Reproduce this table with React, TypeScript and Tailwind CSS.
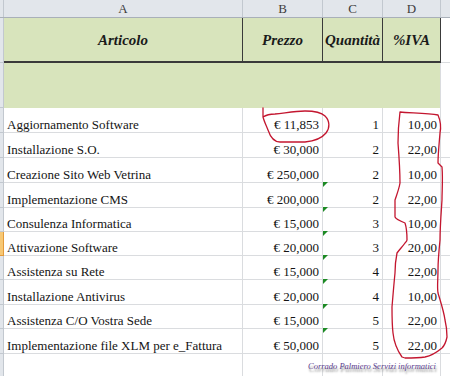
import React from "react";

type Row = {
  name: string;
  price: string;
  qty: string;
  iva: string;
  h: string;
  flag?: boolean;
  sel?: boolean;
};

const rows: Row[] = [
  { name: "Aggiornamento Software", price: "€ 11,853", qty: "1", iva: "10,00", h: "h-[25px]" },
  { name: "Installazione S.O.", price: "€ 30,000", qty: "2", iva: "22,00", h: "h-[25px]" },
  { name: "Creazione Sito Web Vetrina", price: "€ 250,000", qty: "2", iva: "10,00", h: "h-[25px]" },
  { name: "Implementazione CMS", price: "€ 200,000", qty: "2", iva: "22,00", h: "h-[25px]", flag: true },
  { name: "Consulenza Informatica", price: "€ 15,000", qty: "3", iva: "10,00", h: "h-[24px]", flag: true },
  { name: "Attivazione Software", price: "€ 20,000", qty: "3", iva: "20,00", h: "h-[24px]", flag: true, sel: true },
  { name: "Assistenza su Rete", price: "€ 15,000", qty: "4", iva: "22,00", h: "h-[24px]", flag: true },
  { name: "Installazione Antivirus", price: "€ 20,000", qty: "4", iva: "10,00", h: "h-[25px]", flag: true },
  { name: "Assistenza C/O Vostra Sede", price: "€ 15,000", qty: "5", iva: "22,00", h: "h-[24px]", flag: true },
  { name: "Implementazione file XLM per e_Fattura", price: "€ 50,000", qty: "5", iva: "22,00", h: "h-[25px]", flag: true },
];

function Markup() {
  return (
    <svg
      className="pointer-events-none absolute left-0 top-0"
      width={450}
      height={376}
      viewBox="0 0 450 376"
      fill="none"
      stroke="#c3162f"
      strokeWidth={1.3}
      strokeLinejoin="round"
      strokeLinecap="round"
    >
      <path d="M263,108 L263,117 C266,115 270,114 275,114 C285,113 295,111 305,111 C315,111 321,112 325,116 C330,121 330,128 326,133 C322,138 315,141 305,142 L280,142 C273,142 270,136 268,130 C266,125 264,121 263,117" />
      <path d="M400,112 C410,113 428,113 438,115 C441,122 441,128 440,133 C439,145 438,155 438,163 L442,167 C443,180 442,190 442,200 C441,215 440,228 440,240 C439,250 438,260 438,270 C438,280 437,287 438,293 C441,303 444,312 445,320 C447,328 447,333 447,337 C446,342 444,346 442,348 C436,353 430,356 425,357 C418,358 410,358 405,358 L402,357 C397,350 394,343 393,333 C392,325 392,315 392,307 C393,295 394,283 395,273 C395,265 396,258 397,253 C400,249 403,246 405,243 C406,242 407,241 407,240 C407,232 406,226 405,223 C400,221 396,219 395,217 C395,211 395,205 395,200 C397,194 399,189 400,183 C400,170 399,156 398,143 C398,130 399,120 400,112 Z" />
    </svg>
  );
}

export default function App() {
  return (
    <div className="relative h-[376px] w-[450px] overflow-hidden bg-white [font-family:'Liberation_Serif','Times_New_Roman',serif] text-[13px] leading-[15px] text-[#141414]">
      {/* column letters */}
      <div className="flex h-[18px] border-b border-[#a9b0b9] bg-[#e2e6eb] text-[#3d3d3d]">
        <div className="w-[4px] border-r border-[#c2c8cf]" />
        <div className="flex w-[239px] items-center justify-center border-r border-[#c2c8cf]">A</div>
        <div className="flex w-[80px] items-center justify-center border-r border-[#c2c8cf]">B</div>
        <div className="flex w-[60px] items-center justify-center border-r border-[#c2c8cf]">C</div>
        <div className="flex w-[58px] items-center justify-center border-r border-[#c2c8cf]">D</div>
        <div className="flex-1" />
      </div>

      {/* table header */}
      <div className="flex h-[45px] text-[15px] font-bold italic text-[#1a1a1a]">
        <div className="w-[4px] border-r border-b border-[#c2c8cf] bg-[#e2e6eb]" />
        <div className="flex w-[239px] items-center justify-center border-r border-b-2 border-[#3a3a3a] bg-[#d8e4bc] pt-[2px]">Articolo</div>
        <div className="flex w-[80px] items-center justify-center border-r border-b-2 border-[#3a3a3a] bg-[#d8e4bc] pt-[2px]">Prezzo</div>
        <div className="flex w-[60px] items-center justify-center border-r border-b-2 border-[#3a3a3a] bg-[#d8e4bc] pt-[2px]">Quantità</div>
        <div className="flex w-[58px] items-center justify-center border-r border-b-2 border-[#3a3a3a] bg-[#d8e4bc] pt-[2px]">%IVA</div>
        <div className="flex-1 border-b border-[#dadcdf]" />
      </div>

      {/* empty green band */}
      <div className="flex h-[45px]">
        <div className="w-[4px] border-r border-b border-[#c2c8cf] bg-[#e2e6eb]" />
        <div className="w-[436px] bg-[#d8e4bc]" />
        <div className="flex-1 border-l border-[#dadcdf]" />
      </div>

      {/* data rows */}
      {rows.map((r) => (
        <div key={r.name} className={`flex ${r.h}`}>
          <div
            className={
              r.sel
                ? "w-[4px] border-r border-b border-[#e39a3a] bg-[#f7c874]"
                : "w-[4px] border-r border-b border-[#c2c8cf] bg-[#e2e6eb]"
            }
          />
          <div className="flex w-[239px] items-end whitespace-nowrap border-r border-b border-[#dadcdf] pl-[3px]">
            {r.name}
          </div>
          <div className="flex w-[80px] items-end justify-end border-r border-b border-[#dadcdf] pr-[3px]">
            {r.price}
          </div>
          <div className="relative flex w-[60px] items-end justify-end border-r border-b border-[#dadcdf] pr-[3px]">
            {r.flag && (
              <span className="absolute left-0 top-[-1px] h-0 w-0 border-t-[5px] border-r-[5px] border-t-[#1c8a24] border-r-transparent" />
            )}
            {r.qty}
          </div>
          <div className="flex w-[58px] items-end justify-end border-r border-b border-[#dadcdf] pr-[3px]">
            {r.iva}
          </div>
          <div className="flex-1 border-b border-[#dadcdf]" />
        </div>
      ))}

      {/* trailing empty row */}
      <div className="flex h-[25px]">
        <div className="w-[4px] border-r border-b border-[#c2c8cf] bg-[#e2e6eb]" />
        <div className="w-[239px] border-r border-[#dadcdf]" />
        <div className="w-[80px] border-r border-[#dadcdf]" />
        <div className="w-[60px] border-r border-[#dadcdf]" />
        <div className="w-[58px] border-r border-[#dadcdf]" />
        <div className="flex-1" />
      </div>

      {/* signature image */}
      <div className="absolute left-[308px] top-[362px] whitespace-nowrap text-[8.5px] leading-none italic text-[#5a3c8e] [text-shadow:1px_3px_2px_#8a8a8a]">
        Corrado Palmiero Servizi informatici
      </div>

      <Markup />
    </div>
  );
}
